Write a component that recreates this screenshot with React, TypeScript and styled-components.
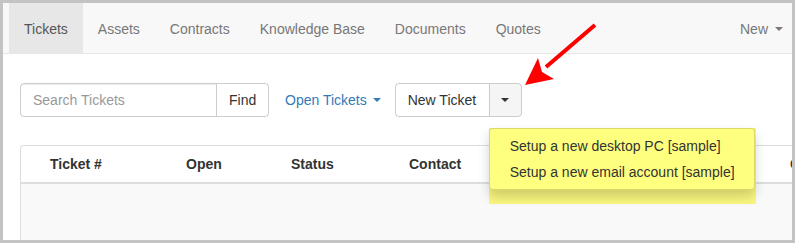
import styled, { createGlobalStyle } from "styled-components";

const GlobalStyle = createGlobalStyle`
    html, body {
        margin: 0;
        padding: 0;
        background: #fff;
    }
    body {
        font-family: "Liberation Sans", Arial, sans-serif;
        font-size: 14px;
        line-height: 20px;
        color: #333;
    }
    * {
        box-sizing: border-box;
    }
`;

const navItems = ["Tickets", "Assets", "Contracts", "Knowledge Base", "Documents", "Quotes"];
const columns = [
    { label: "Ticket #", width: 136 },
    { label: "Open", width: 105 },
    { label: "Status", width: 118 },
    { label: "Contact", width: 381 },
    { label: "Created", width: 80 },
];
const templates = ["Setup a new desktop PC [sample]", "Setup a new email account [sample]"];

const Caret = () => <CaretShape />;

const App = () => {
    return <Frame>
        <GlobalStyle />
        <Navbar>
            <NavList>
                {navItems.map((n, i) => (
                    <NavLink key={n} $active={i === 0}>{n}</NavLink>
                ))}
            </NavList>
            <NavRight>New <Caret /></NavRight>
        </Navbar>
        <Content>
            <Toolbar>
                <SearchGroup>
                    <SearchInput placeholder="Search Tickets" />
                    <FindButton>Find</FindButton>
                </SearchGroup>
                <FilterLink>Open Tickets <Caret /></FilterLink>
                <SplitButton>
                    <MainButton>New Ticket</MainButton>
                    <CaretButton><Caret /></CaretButton>
                    <Highlight />
                    <Menu>
                        {templates.map(t => (<MenuItem key={t}>{t}</MenuItem>))}
                    </Menu>
                </SplitButton>
            </Toolbar>
            <Panel>
                <HeaderRow>
                    {columns.map(c => (
                        <HeaderCell key={c.label} style={{ width: c.width }}>{c.label}</HeaderCell>
                    ))}
                </HeaderRow>
                <PanelBody />
            </Panel>
        </Content>
        <Arrow width="80" height="70" viewBox="0 0 80 70">
            <line x1="71" y1="5" x2="22" y2="47" stroke="#ff0000" strokeWidth="4" />
            <polygon points="1,65 14,38 18,52 30,59" fill="#ff0000" />
        </Arrow>
    </Frame>
}

export default App;

const Frame = styled.div`
    position: relative;
    width: 795px;
    height: 243px;
    border: 3px solid #c3c3c3;
    overflow: hidden;
    background: #fff;
`;

const Navbar = styled.div`
    display: flex;
    justify-content: space-between;
    align-items: stretch;
    height: 51px;
    padding-left: 6px;
    padding-right: 6px;
    background: #f8f8f8;
    border-bottom: 1px solid #e7e7e7;
`;

const NavList = styled.div`
    display: flex;
`;

const NavLink = styled.div<{ $active?: boolean }>`
    padding: 16px 15px 14px;
    line-height: 20px;
    color: ${p => p.$active ? "#555" : "#777"};
    background: ${p => p.$active ? "#e7e7e7" : "transparent"};
    cursor: pointer;
`;

const NavRight = styled.div`
    display: flex;
    align-items: center;
    gap: 7px;
    padding: 2px 3px 0 15px;
    color: #777;
    span {
        border-top-color: #777;
    }
`;

const CaretShape = styled.span`
    display: inline-block;
    width: 0;
    height: 0;
    border-top: 4px solid #333;
    border-right: 4px solid transparent;
    border-left: 4px solid transparent;
`;

const Content = styled.div`
    padding: 29px 0 0 17px;
`;

const Toolbar = styled.div`
    display: flex;
    align-items: center;
    height: 34px;
`;

const SearchGroup = styled.div`
    display: flex;
    height: 34px;
`;

const SearchInput = styled.input`
    width: 197px;
    height: 34px;
    padding: 6px 12px;
    border: 1px solid #ccc;
    border-radius: 4px 0 0 4px;
    font-family: inherit;
    font-size: 14px;
    color: #555;
    box-shadow: inset 0 1px 1px rgba(0, 0, 0, .075);
    outline: none;

    &::placeholder {
        color: #999;
    }
`;

const FindButton = styled.button`
    width: 53px;
    height: 34px;
    margin-left: -1px;
    padding: 6px 12px;
    background: #fff;
    border: 1px solid #ccc;
    border-radius: 0 4px 4px 0;
    font-family: inherit;
    font-size: 14px;
    color: #333;
`;

const FilterLink = styled.div`
    display: flex;
    align-items: center;
    gap: 6px;
    margin-left: 16px;
    color: #337ab7;
    cursor: pointer;

    span {
        border-top-color: #337ab7;
    }
`;

const SplitButton = styled.div`
    position: relative;
    display: flex;
    height: 34px;
    margin-left: 14px;
`;

const MainButton = styled.button`
    width: 95px;
    height: 34px;
    padding: 6px 12px;
    background: #fff;
    border: 1px solid #ccc;
    border-radius: 4px 0 0 4px;
    font-family: inherit;
    font-size: 14px;
    color: #333;
    text-align: left;
    white-space: nowrap;
`;

const CaretButton = styled.button`
    display: flex;
    align-items: center;
    justify-content: center;
    width: 33px;
    height: 34px;
    margin-left: -1px;
    background: #f5f5f5;
    border: 1px solid #ccc;
    border-radius: 0 4px 4px 0;
`;

const Highlight = styled.div`
    position: absolute;
    top: 45px;
    left: 94px;
    width: 267px;
    height: 76px;
    background: #f9f67f;
    z-index: 1;
`;

const Menu = styled.div`
    position: absolute;
    top: 45px;
    left: 94px;
    width: 266px;
    padding: 4px 0;
    background: #ffff7f;
    border: 1px solid rgba(0, 0, 0, .15);
    border-radius: 4px;
    box-shadow: 0 6px 12px rgba(0, 0, 0, .175);
    z-index: 2;
`;

const MenuItem = styled.div`
    padding: 3px 20px;
    line-height: 20px;
    color: #333;
    white-space: nowrap;
`;

const Panel = styled.div`
    margin-top: 28px;
    width: 800px;
    border-top: 1px solid #ddd;
    border-left: 1px solid #ddd;
    border-radius: 4px 0 0 0;
    background: #fff;
`;

const HeaderRow = styled.div`
    display: flex;
    height: 38px;
    padding-left: 29px;
    border-bottom: 2px solid #ddd;
    white-space: nowrap;
    overflow: hidden;
`;

const HeaderCell = styled.div`
    flex: none;
    padding-top: 8px;
    font-weight: bold;
    color: #333;
`;

const PanelBody = styled.div`
    height: 80px;
    background: #f9f9f9;
`;

const Arrow = styled.svg`
    position: absolute;
    left: 521px;
    top: 17px;
    z-index: 3;
`;
